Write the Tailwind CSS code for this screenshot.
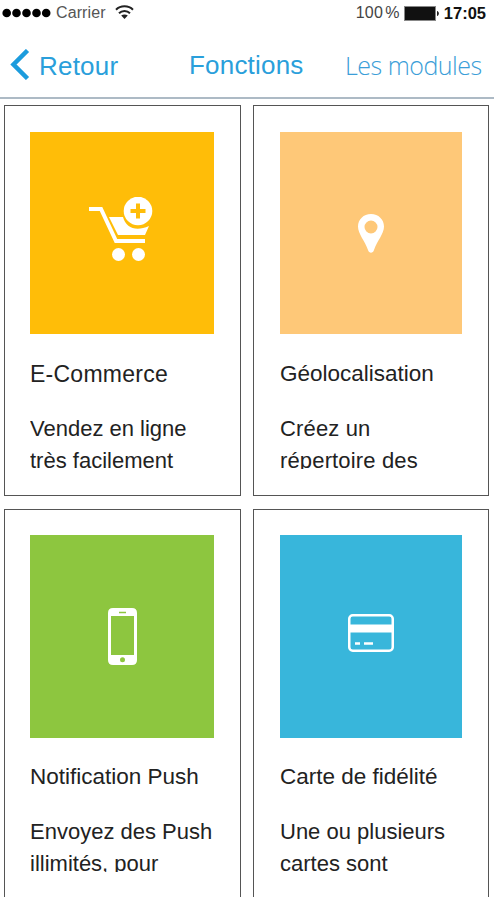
<!DOCTYPE html>
<html lang="fr">
  <head>
    <meta charset="UTF-8" />
    <meta name="viewport" content="width=device-width, initial-scale=1.0" />
    <title>Fonctions</title>
    <script src="https://cdn.jsdelivr.net/npm/@tailwindcss/browser@4"></script>
  </head>
  <body class="h-[900px] overflow-hidden bg-white font-['Liberation_Sans',Arial,sans-serif] text-[#222]">
    <div class="flex h-[897px] w-[494px] flex-col overflow-hidden">
      <!-- Status bar -->
      <div class="flex h-[26px] shrink-0 items-center pl-[2px] pr-[8px] text-[16px] leading-[26px]">
        <svg class="h-[10px] w-[49px]" viewBox="0 0 49 10" fill="#000">
          <circle cx="4.7" cy="5" r="4.3" />
          <circle cx="14.5" cy="5" r="4.3" />
          <circle cx="24.5" cy="5" r="4.3" />
          <circle cx="34.5" cy="5" r="4.3" />
          <circle cx="44.2" cy="5" r="4.3" />
        </svg>
        <span class="ml-[5px] tracking-[0.1px] text-[#555]">Carrier</span>
        <svg class="ml-[9px] mt-[-3px] h-[14px] w-[19px]" viewBox="0 0 19 14" fill="none" stroke="#222" stroke-width="2">
          <path d="M1 4.8C5.5.2 13.5.2 18 4.8" />
          <path d="M4 8.2C7 5.2 12 5.2 15 8.2" />
          <path d="M9.5 14L6.2 10.6C8 9 11 9 12.8 10.6Z" fill="#222" stroke="none" />
        </svg>
        <span class="ml-auto tracking-[0.3px] text-[#444]">100<span class="ml-[2px]">%</span></span>
        <svg class="ml-[4px] h-[15px] w-[36px]" viewBox="0 0 36 15">
          <rect x="0.5" y="0.5" width="31" height="14" fill="#111" stroke="#888" />
          <path d="M33 5C35.5 5.5 35.5 9.5 33 10Z" fill="#222" />
        </svg>
        <span class="ml-[4px] text-[16.5px] font-bold text-[#111]">17:05</span>
      </div>

      <!-- Navigation -->
      <nav class="flex h-[73px] shrink-0 items-center border-b-2 border-[#adbac5] pl-[10px] pt-[5px] text-[26px] text-[#2a9fdb]">
        <svg class="h-[31px] w-[20px]" viewBox="0 0 20 31" fill="none" stroke="#1c9cdd" stroke-width="4.5">
          <path d="M17.5 1.5L3.5 15.5L17.5 29.5" />
        </svg>
        <a class="ml-[9px] mt-[4px] w-[80px] whitespace-nowrap tracking-[0.2px]">Retour</a>
        <h1 class="ml-[70px] mt-[2px] w-[115px] whitespace-nowrap tracking-[0.2px]">Fonctions</h1>
        <a class="ml-[41px] mt-[4px] whitespace-nowrap font-['Open_Sans','Noto_Sans',sans-serif] text-[25px] font-light tracking-[-0.5px] text-[#3b9ed8]">Les modules</a>
      </nav>

      <!-- Modules -->
      <main class="grid grid-cols-[237px_236px] gap-x-[12px] gap-y-[13px] pl-[4px] pt-[6px] text-[22px]">
        <section class="h-[391px] border border-[#555] px-[25px] pt-[26px]">
          <div class="flex h-[202px] w-[184px] items-center justify-center bg-[#ffbd08]">
            <svg class="mt-[-6px] h-[66px] w-[66px]" viewBox="0 0 66 66" fill="#fff">
              <path d="M0 12H12L27 44H56" fill="none" stroke="#fff" stroke-width="4" />
              <path d="M20 20H34C37 31 47 35 60 29L56 38H29Z" />
              <circle cx="49" cy="14" r="14.3" />
              <path d="M49 6.5V21.5M41.5 14H56.5" stroke="#ffbd08" stroke-width="4" />
              <circle cx="29.5" cy="57.5" r="6.5" />
              <circle cx="49.5" cy="57.5" r="6.5" />
            </svg>
          </div>
          <h2 class="mt-[24px] whitespace-nowrap text-[23px] leading-8 tracking-[0.25px]">E-Commerce</h2>
          <p class="mt-[23px] h-[56px] overflow-hidden leading-[31.5px]">Vendez en ligne très facilement</p>
        </section>

        <section class="h-[391px] border border-[#555] px-[26px] pt-[26px]">
          <div class="flex h-[202px] w-[182px] items-center justify-center bg-[#fec878]">
            <svg class="h-[39px] w-[26px]" viewBox="0 0 26 39" fill="#fff">
              <path fill-rule="evenodd" d="M13 0C5.5 0 0 5.5 0 12.5C0 20 7 27 10 36C11 39.5 15 39.5 16 36C19 27 26 20 26 12.5C26 5.5 20.5 0 13 0ZM13 6.5A6.5 6.5 0 1 1 13 19.5A6.5 6.5 0 1 1 13 6.5Z" />
            </svg>
          </div>
          <h2 class="mt-[24px] whitespace-nowrap text-[22.5px] leading-8">Géolocalisation</h2>
          <p class="mt-[23px] h-[56px] overflow-hidden leading-[31.5px] tracking-[0.15px]">Créez un répertoire des</p>
        </section>

        <section class="h-[391px] border border-[#555] px-[25px] pt-[25px]">
          <div class="flex h-[203px] w-[184px] items-center justify-center bg-[#8dc63f]">
            <svg class="h-[57px] w-[29px]" viewBox="0 0 29 57" fill="#fff">
              <path fill-rule="evenodd" d="M5 0H24Q29 0 29 5V52Q29 57 24 57H5Q0 57 0 52V5Q0 0 5 0ZM3 8V47H26V8Z" />
              <path d="M11 4.5H18" stroke="#8dc63f" stroke-width="1.5" />
              <circle cx="14.5" cy="51.7" r="2.5" fill="#8dc63f" />
            </svg>
          </div>
          <h2 class="mt-[23px] whitespace-nowrap text-[22.5px] leading-8">Notification Push</h2>
          <p class="mt-[23px] h-[56px] overflow-hidden leading-[31.5px]">Envoyez des Push<br />illimités, pour</p>
        </section>

        <section class="h-[391px] border border-[#555] px-[26px] pt-[25px]">
          <div class="flex h-[203px] w-[182px] items-center justify-center bg-[#38b6db]">
            <svg class="mt-[-7px] h-[38px] w-[46px]" viewBox="0 0 46 38" fill="none" stroke="#fff">
              <rect x="1.25" y="1.25" width="43.5" height="35.5" rx="3.5" stroke-width="2.5" />
              <path d="M1 14.5H45" stroke-width="8" />
              <path d="M7 29.5H12M16 29.5H25" stroke-width="2.5" />
            </svg>
          </div>
          <h2 class="mt-[23px] whitespace-nowrap text-[22.5px] leading-8">Carte de fidélité</h2>
          <p class="mt-[23px] h-[56px] overflow-hidden leading-[31.5px]">Une ou plusieurs cartes sont</p>
        </section>
      </main>
    </div>
  </body>
</html>
